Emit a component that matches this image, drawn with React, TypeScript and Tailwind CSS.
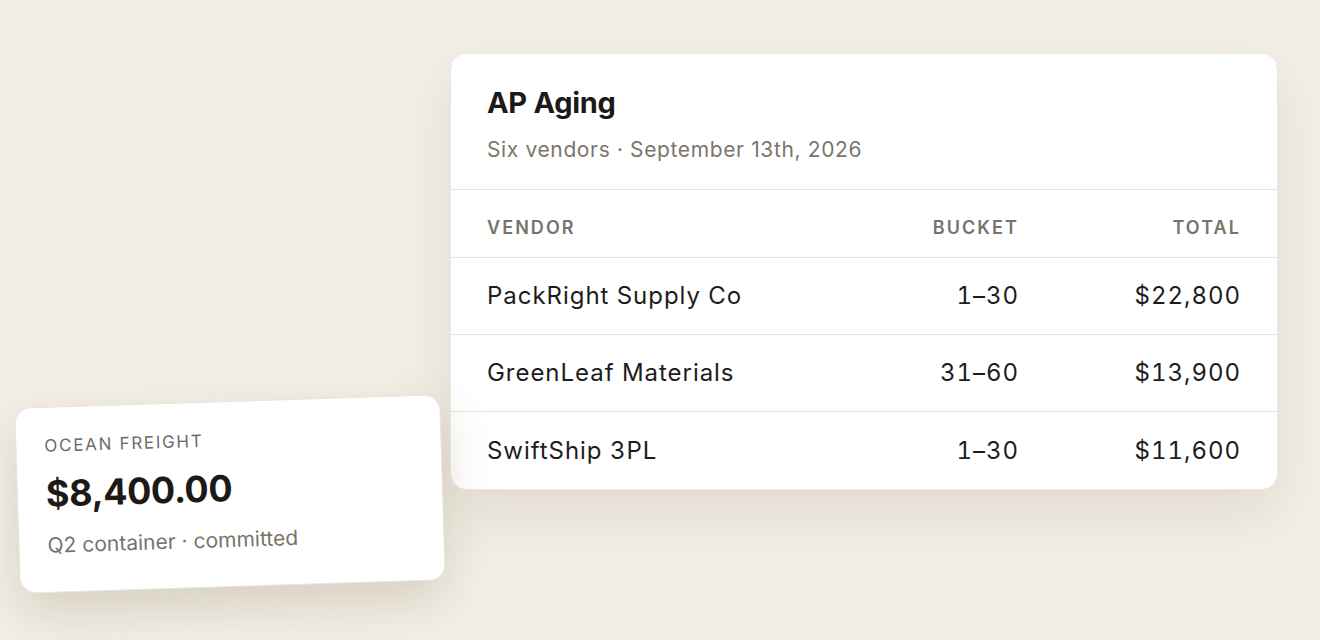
import React from 'react';

const rows = [
  { vendor: 'PackRight Supply Co', bucket: '1–30', total: '$22,800' },
  { vendor: 'GreenLeaf Materials', bucket: '31–60', total: '$13,900' },
  { vendor: 'SwiftShip 3PL', bucket: '1–30', total: '$11,600' },
];

const App: React.FC = () => {
  return (
    <div
      className="relative w-[1320px] h-[640px] overflow-hidden bg-[#f4efe6]"
      style={{ fontFamily: 'Inter, "Noto Sans", sans-serif' }}
    >
      {/* AP aging card */}
      <div className="ml-[450px] mt-[53px] w-[828px] bg-white rounded-[16px] border border-[#ece8e0] shadow-[0_24px_60px_rgba(120,105,80,0.16)] overflow-hidden">
        <div className="px-[36px] pt-[31px] pb-[25px] border-b border-[#e6e3de]">
          <h1 className="text-[29px] leading-[36px] font-bold text-[#1b1a18] tracking-[-0.01em]">AP Aging</h1>
          <p className="mt-[15px] text-[21px] leading-[28px] tracking-[0.03em] text-[#7a766d]">Six vendors · September 13th, 2026</p>
        </div>

        <div className="grid grid-cols-[1fr_180px_222px] items-center h-[68px] pt-[7px] px-[36px] border-b border-[#e6e3de] text-[18px] font-semibold tracking-[0.115em] text-[#77736a]">
          <div>VENDOR</div>
          <div className="text-right">BUCKET</div>
          <div className="text-right">TOTAL</div>
        </div>

        {rows.map((r, i) => (
          <div
            key={r.vendor}
            className={`grid grid-cols-[1fr_180px_222px] items-center h-[77px] px-[36px] text-[24px] tracking-[0.04em] tabular-nums text-[#1e1d1b] ${i < rows.length - 1 ? 'border-b border-[#e6e3de]' : ''}`}
          >
            <div>{r.vendor}</div>
            <div className="text-right">{r.bucket}</div>
            <div className="text-right">{r.total}</div>
          </div>
        ))}
      </div>

      {/* floating freight card */}
      <div className="absolute left-[17px] top-[401px] w-[426px] h-[186px] bg-white rounded-[16px] border border-[#e9e5dd] shadow-[0_20px_50px_rgba(110,95,70,0.22)] rotate-[-1.8deg] px-[28px] pt-[26px]">
        <div className="text-[17px] leading-[24px] tracking-[0.1em] text-[#6f6b63]">OCEAN FREIGHT</div>
        <div className="mt-[14px] text-[36px] leading-[44px] font-bold text-[#1b1a18] tracking-[-0.01em]">$8,400.00</div>
        <div className="mt-[16px] text-[21px] leading-[28px] text-[#77736a]">Q2 container · committed</div>
      </div>
    </div>
  );
};

export default App;
